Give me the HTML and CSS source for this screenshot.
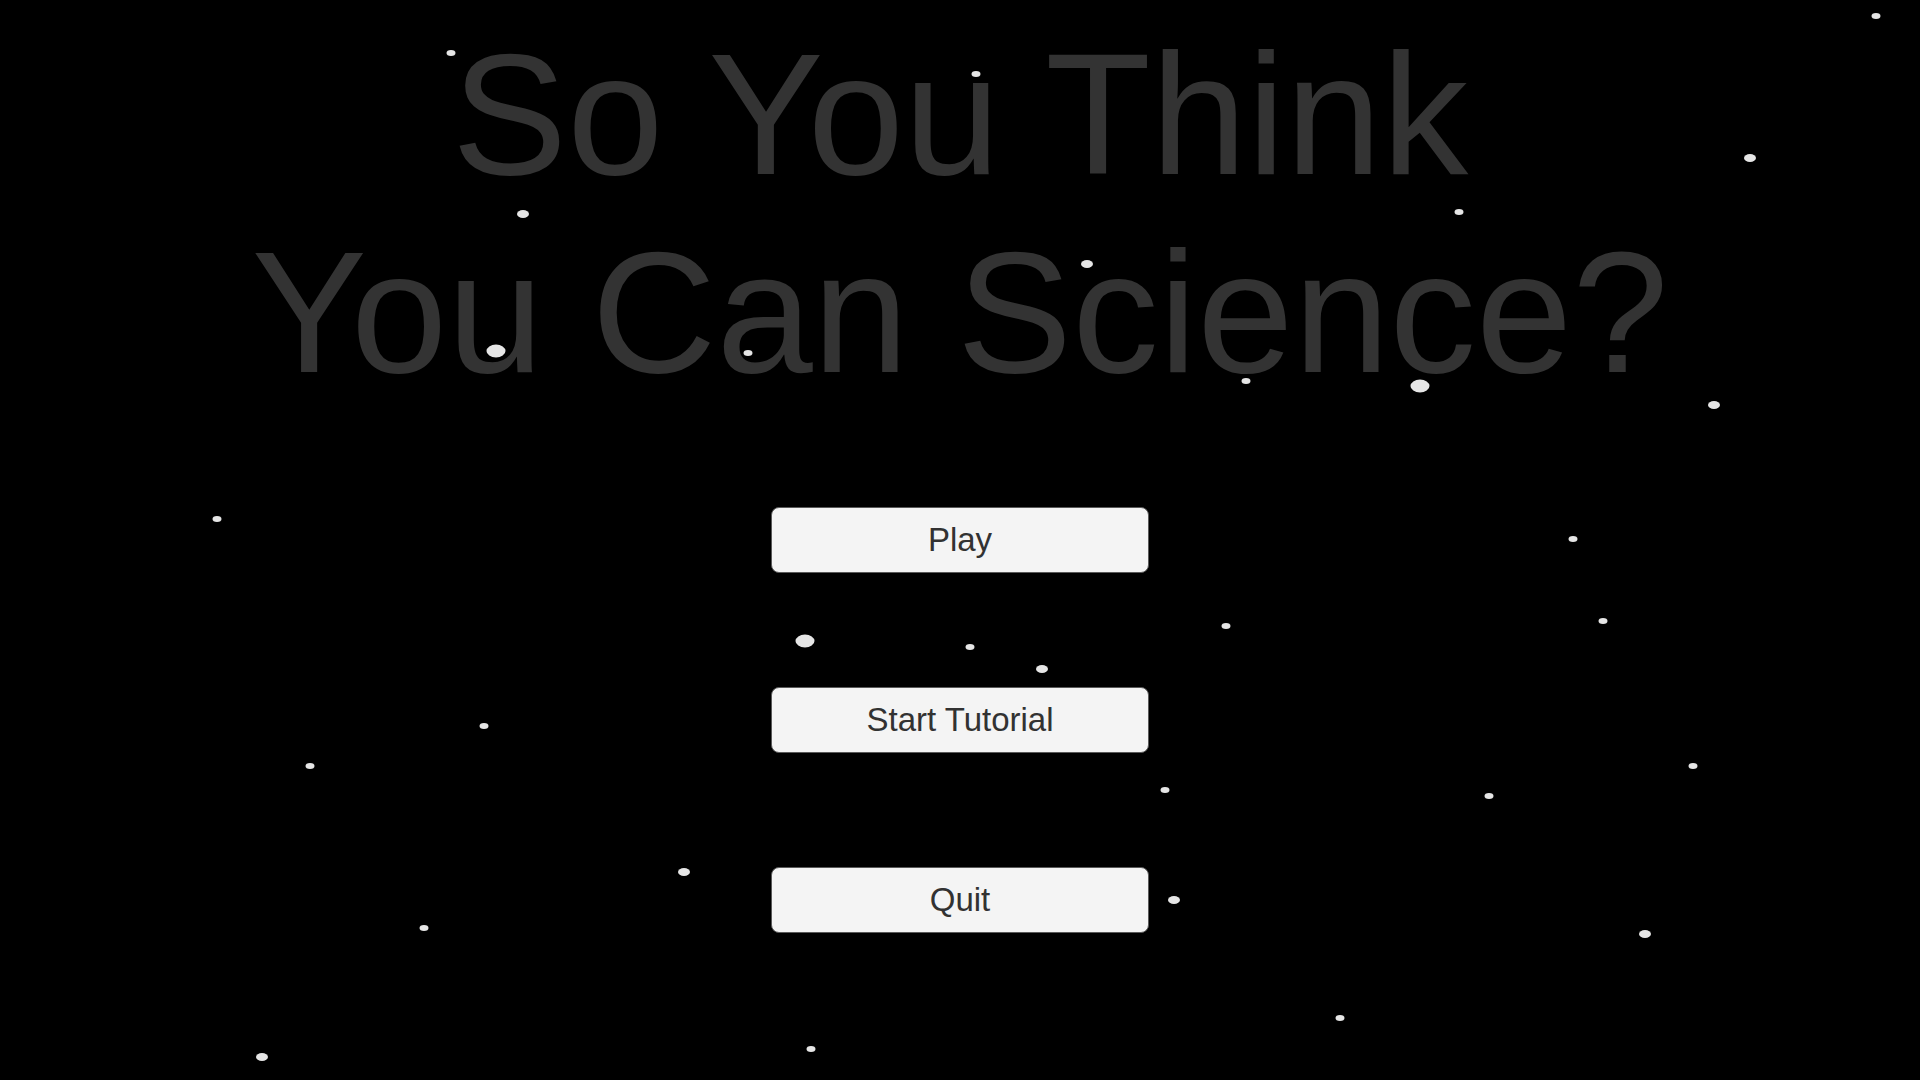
FILE: index.html
```html
<!DOCTYPE html>
<html lang="en">
<head>
    <meta charset="UTF-8">
    <title>So You Think You Can Science?</title>

    <link rel="stylesheet" href="styles.css">

    <script>

        window.onload = function () {

            /// star field: centre x, centre y, size
            var stars = [
                [1876, 16, "s"], [451, 53, "s"], [976, 74, "s"], [1750, 158, "m"],
                [523, 214, "m"], [1459, 212, "s"], [1087, 264, "m"], [496, 351, "l"],
                [748, 353, "s"], [1246, 381, "s"], [1420, 386, "l"], [1714, 405, "m"],
                [217, 519, "s"], [1573, 539, "s"], [805, 641, "l"], [970, 647, "s"],
                [1042, 669, "m"], [1226, 626, "s"], [1603, 621, "s"], [484, 726, "s"],
                [310, 766, "s"], [1165, 790, "s"], [1489, 796, "s"], [1693, 766, "s"],
                [684, 872, "m"], [424, 928, "s"], [1174, 900, "m"], [1645, 934, "m"],
                [1340, 1018, "s"], [262, 1057, "m"], [811, 1049, "s"]
            ];

            var sky = document.getElementById("sky");

            for (var i=0; i<stars.length; i++) {
                var star = document.createElement("span");
                star.className = "star star-" + stars[i][2];
                star.style.left = stars[i][0] + "px";
                star.style.top = stars[i][1] + "px";
                sky.appendChild(star);
            }

        }

    </script>

</head>

<body>

    <div class="menu">

        <h1 class="title">
            <span>So You Think</span>
            <span>You Can Science?</span>
        </h1>

        <div class="buttons">
            <button class="btn">Play</button>
            <button class="btn">Start Tutorial</button>
            <button class="btn">Quit</button>
        </div>

    </div>

    <div id="sky"></div>

</body>
</html>
```

FILE: styles.css
```css
* {
    margin: 0px;
    padding: 0px;
}

html, body {
    width: 100%;
    height: 100%;
    background-color: #000;
    overflow: hidden;
}

body {
    font-family: "Liberation Sans", Arial, sans-serif;
    position: relative;
}

.menu {
    display: flex;
    flex-direction: column;
    align-items: center;
    padding-top: 15px;
}

.title {
    font-size: 173px;
    font-weight: normal;
    line-height: 198px;
    color: #333;
    text-align: center;
}

.title span {
    display: block;
    white-space: nowrap;
}

.buttons {
    display: flex;
    flex-direction: column;
    align-items: center;
    gap: 114px;
    margin-top: 96px;
}

.btn {
    width: 378px;
    height: 66px;
    background-color: #f4f4f4;
    border: 1px solid #5a5a5a;
    border-radius: 8px;
    font-family: "Liberation Sans", Arial, sans-serif;
    font-size: 33px;
    color: #323232;
    cursor: pointer;
}

/* stars sit above the title */
#sky {
    position: absolute;
    left: 0px;
    top: 0px;
    width: 100%;
    height: 100%;
    pointer-events: none;
}

.star {
    position: absolute;
    display: block;
    border-radius: 50%;
    background-color: #e6e6e6;
    transform: translate(-50%, -50%);
    filter: blur(0.7px);
}

.star-s {
    width: 9px;
    height: 6px;
}

.star-m {
    width: 12px;
    height: 8px;
}

.star-l {
    width: 19px;
    height: 13px;
}
```
